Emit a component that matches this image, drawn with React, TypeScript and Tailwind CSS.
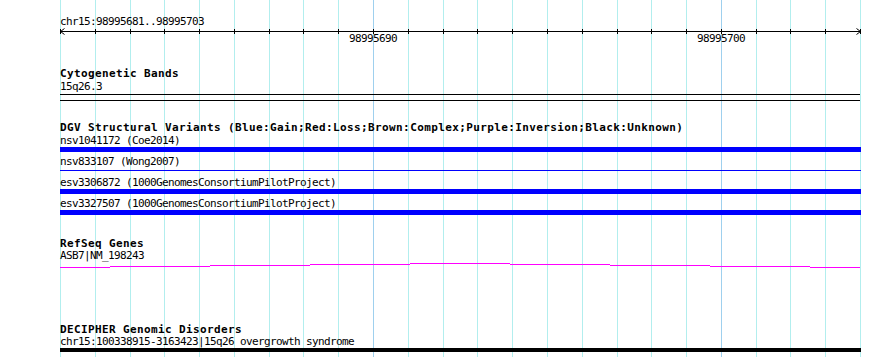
import React from "react";

const W = 800;
const N = 23;
const xs = Array.from({ length: N + 1 }, (_, i) => Math.round(60 + (i * W) / N));

const font = { fontFamily: '"DejaVu Sans Mono", "Liberation Mono", monospace' };

function Txt({ children, className = "h-[13px] leading-[13px]" }: { children: React.ReactNode; className?: string }) {
  return (
    <div className={`text-[11px] tracking-[-0.62px] whitespace-nowrap text-black overflow-visible ${className}`}>
      {children}
    </div>
  );
}

function Title({ children, className = "h-[13px] leading-[13px]" }: { children: React.ReactNode; className?: string }) {
  return (
    <div className={`text-[11px] font-bold tracking-[0.38px] whitespace-nowrap text-black ${className}`}>
      {children}
    </div>
  );
}

const steps: [number, number, number][] = [
  [60, 110, 5],
  [110, 210, 4],
  [210, 310, 3],
  [310, 410, 2],
  [410, 510, 1],
  [510, 610, 2],
  [610, 710, 3],
  [710, 810, 4],
  [810, 860, 5],
];

export default function App() {
  return (
    <div className="relative w-[890px] h-[357px] overflow-hidden bg-white" style={font}>
      <svg className="absolute inset-0" width={890} height={357} shapeRendering="crispEdges">
        {xs.map((x, i) => (
          <rect
            key={i}
            x={x}
            y={0}
            width={1}
            height={357}
            fill={i === 9 || i === 19 ? "#9fd0ee" : "#b2eeee"}
          />
        ))}
      </svg>

      <div className="relative flex flex-col w-[801px] ml-[60px] pt-[15px]">
        <Txt className="h-[13px] leading-[13px]">chr15:98995681..98995703</Txt>

        <div className="relative h-[17px] -ml-[60px] w-[890px]">
          <svg className="absolute left-0 top-0" width={890} height={8} shapeRendering="crispEdges">
            <rect x={60} y={3} width={801} height={1} fill="#000" />
            {xs.map((x, i) => (
              <rect key={i} x={x} y={1} width={1} height={5} fill="#000" />
            ))}
            <path d="M64.5 0.5 L60.5 3.5 L64.5 6.5" stroke="#000" fill="none" shapeRendering="auto" />
            <path d="M856.5 0.5 L860.5 3.5 L856.5 6.5" stroke="#000" fill="none" shapeRendering="auto" />
          </svg>
          <div className="absolute top-[4px] left-[349px]">
            <Txt>98995690</Txt>
          </div>
          <div className="absolute top-[4px] left-[697px]">
            <Txt>98995700</Txt>
          </div>
        </div>

        <Title className="mt-[23px] h-[12px] leading-[12px]">Cytogenetic Bands</Title>
        <Txt className="h-[14px] leading-[13px]">15q26.3</Txt>
        <div className="h-px bg-black w-[800px]" />
        <div className="h-px bg-black w-[800px] mt-[5px]" />

        <Title className="mt-[20px] h-[13px] leading-[13px]">
          DGV Structural Variants (Blue:Gain;Red:Loss;Brown:Complex;Purple:Inversion;Black:Unknown)
        </Title>
        <Txt className="h-[13px] leading-[13px]">nsv1041172 (Coe2014)</Txt>
        <div className="h-[5px] bg-[#0000ff] w-[801px]" />
        <Txt className="mt-[3px] h-[15px] leading-[13px]">nsv833107 (Wong2007)</Txt>
        <div className="h-px bg-[#0000ff] w-[801px]" />
        <Txt className="mt-[5px] h-[13px] leading-[13px]">esv3306872 (1000GenomesConsortiumPilotProject)</Txt>
        <div className="h-[5px] bg-[#0000ff] w-[801px]" />
        <Txt className="mt-[3px] h-[13px] leading-[13px]">esv3327507 (1000GenomesConsortiumPilotProject)</Txt>
        <div className="h-[5px] bg-[#0000ff] w-[801px]" />

        <Title className="mt-[23px] h-[12px] leading-[12px]">RefSeq Genes</Title>
        <Txt className="h-[12px] leading-[12px]">ASB7|NM_198243</Txt>
        <svg width={801} height={7} shapeRendering="crispEdges" className="block">
          {steps.map(([a, b, y], i) => (
            <rect key={i} x={a - 60} y={y} width={b - a} height={1} fill="#ff00ff" />
          ))}
        </svg>

        <Title className="mt-[55px] h-[12px] leading-[12px]">DECIPHER Genomic Disorders</Title>
        <Txt className="h-[12px] leading-[12px]">chr15:100338915-3163423|15q26 overgrowth syndrome</Txt>
        <div className="h-[4px] bg-black w-[801px]" />
      </div>
    </div>
  );
}
